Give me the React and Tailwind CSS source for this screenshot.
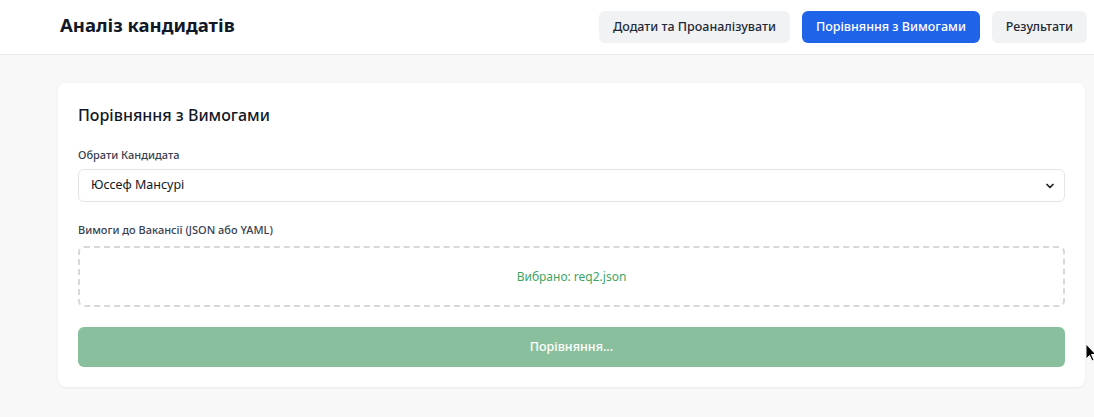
import { ChevronDown } from 'lucide-react';

const tabs = [
  { label: 'Додати та Проаналізувати', active: false },
  { label: 'Порівняння з Вимогами', active: true },
  { label: 'Результати', active: false },
];

export default function App() {
  return (
    <div
      className="relative min-h-[417px] bg-[#f8f8f8] text-[#111827]"
      style={{ fontFamily: '"Noto Sans", "Open Sans", sans-serif' }}
    >
      <header className="flex h-[55px] items-center justify-between border-b border-[#e8e8e8] bg-white pl-[60px] pr-[7px]">
        <h1 className="pb-1 text-[18.5px] font-bold leading-none">Аналіз кандидатів</h1>
        <nav className="flex items-center gap-3">
          {tabs.map((t) => (
            <button
              key={t.label}
              className={
                t.active
                  ? 'h-8 rounded-md bg-[#1f63e9] px-3.5 text-[12.5px] font-medium text-white'
                  : 'h-8 rounded-md bg-[#f1f2f4] px-3.5 text-[12.5px] font-medium text-[#1f2937]'
              }
            >
              {t.label}
            </button>
          ))}
        </nav>
      </header>

      <main className="px-[58px] pt-7">
        <section className="w-[1027px] rounded-lg bg-white p-5 shadow-[0_1px_3px_rgba(0,0,0,0.06)]">
          <h2 className="mb-5 text-[16px] font-medium leading-6">Порівняння з Вимогами</h2>

          <label className="mb-1.5 block text-[11px] font-medium leading-4 text-[#374151]">
            Обрати Кандидата
          </label>
          <div className="mb-5 flex h-[33px] items-center justify-between rounded-md border border-[#e2e4e8] pl-3 pr-2 text-[12.5px]">
            <span>Юссеф Мансурі</span>
            <ChevronDown className="h-3 w-3 text-[#222]" strokeWidth={3.5} />
          </div>

          <label className="mb-2 block text-[11px] font-medium leading-4 text-[#374151]">
            Вимоги до Вакансії (JSON або YAML)
          </label>
          <div className="mb-5 flex h-[61px] items-center justify-center rounded-md border-2 border-dashed border-[#d6d8dc] text-[12px] text-[#3fa463]">
            Вибрано: req2.json
          </div>

          <button className="flex h-10 w-full items-center justify-center rounded-md bg-[#8abf9d] text-[12.5px] font-medium text-white">
            Порівняння...
          </button>
        </section>
      </main>

      {/* mouse pointer */}
      <svg
        className="absolute left-[1085px] top-[343px]"
        width="12"
        height="20"
        viewBox="0 0 12 20"
      >
        <path d="M1 1 L1 16 L4.5 12.5 L7 18 L9 17 L6.5 11.5 L11 11.5 Z" fill="#000" stroke="#fff" strokeWidth="1" />
      </svg>
    </div>
  );
}
